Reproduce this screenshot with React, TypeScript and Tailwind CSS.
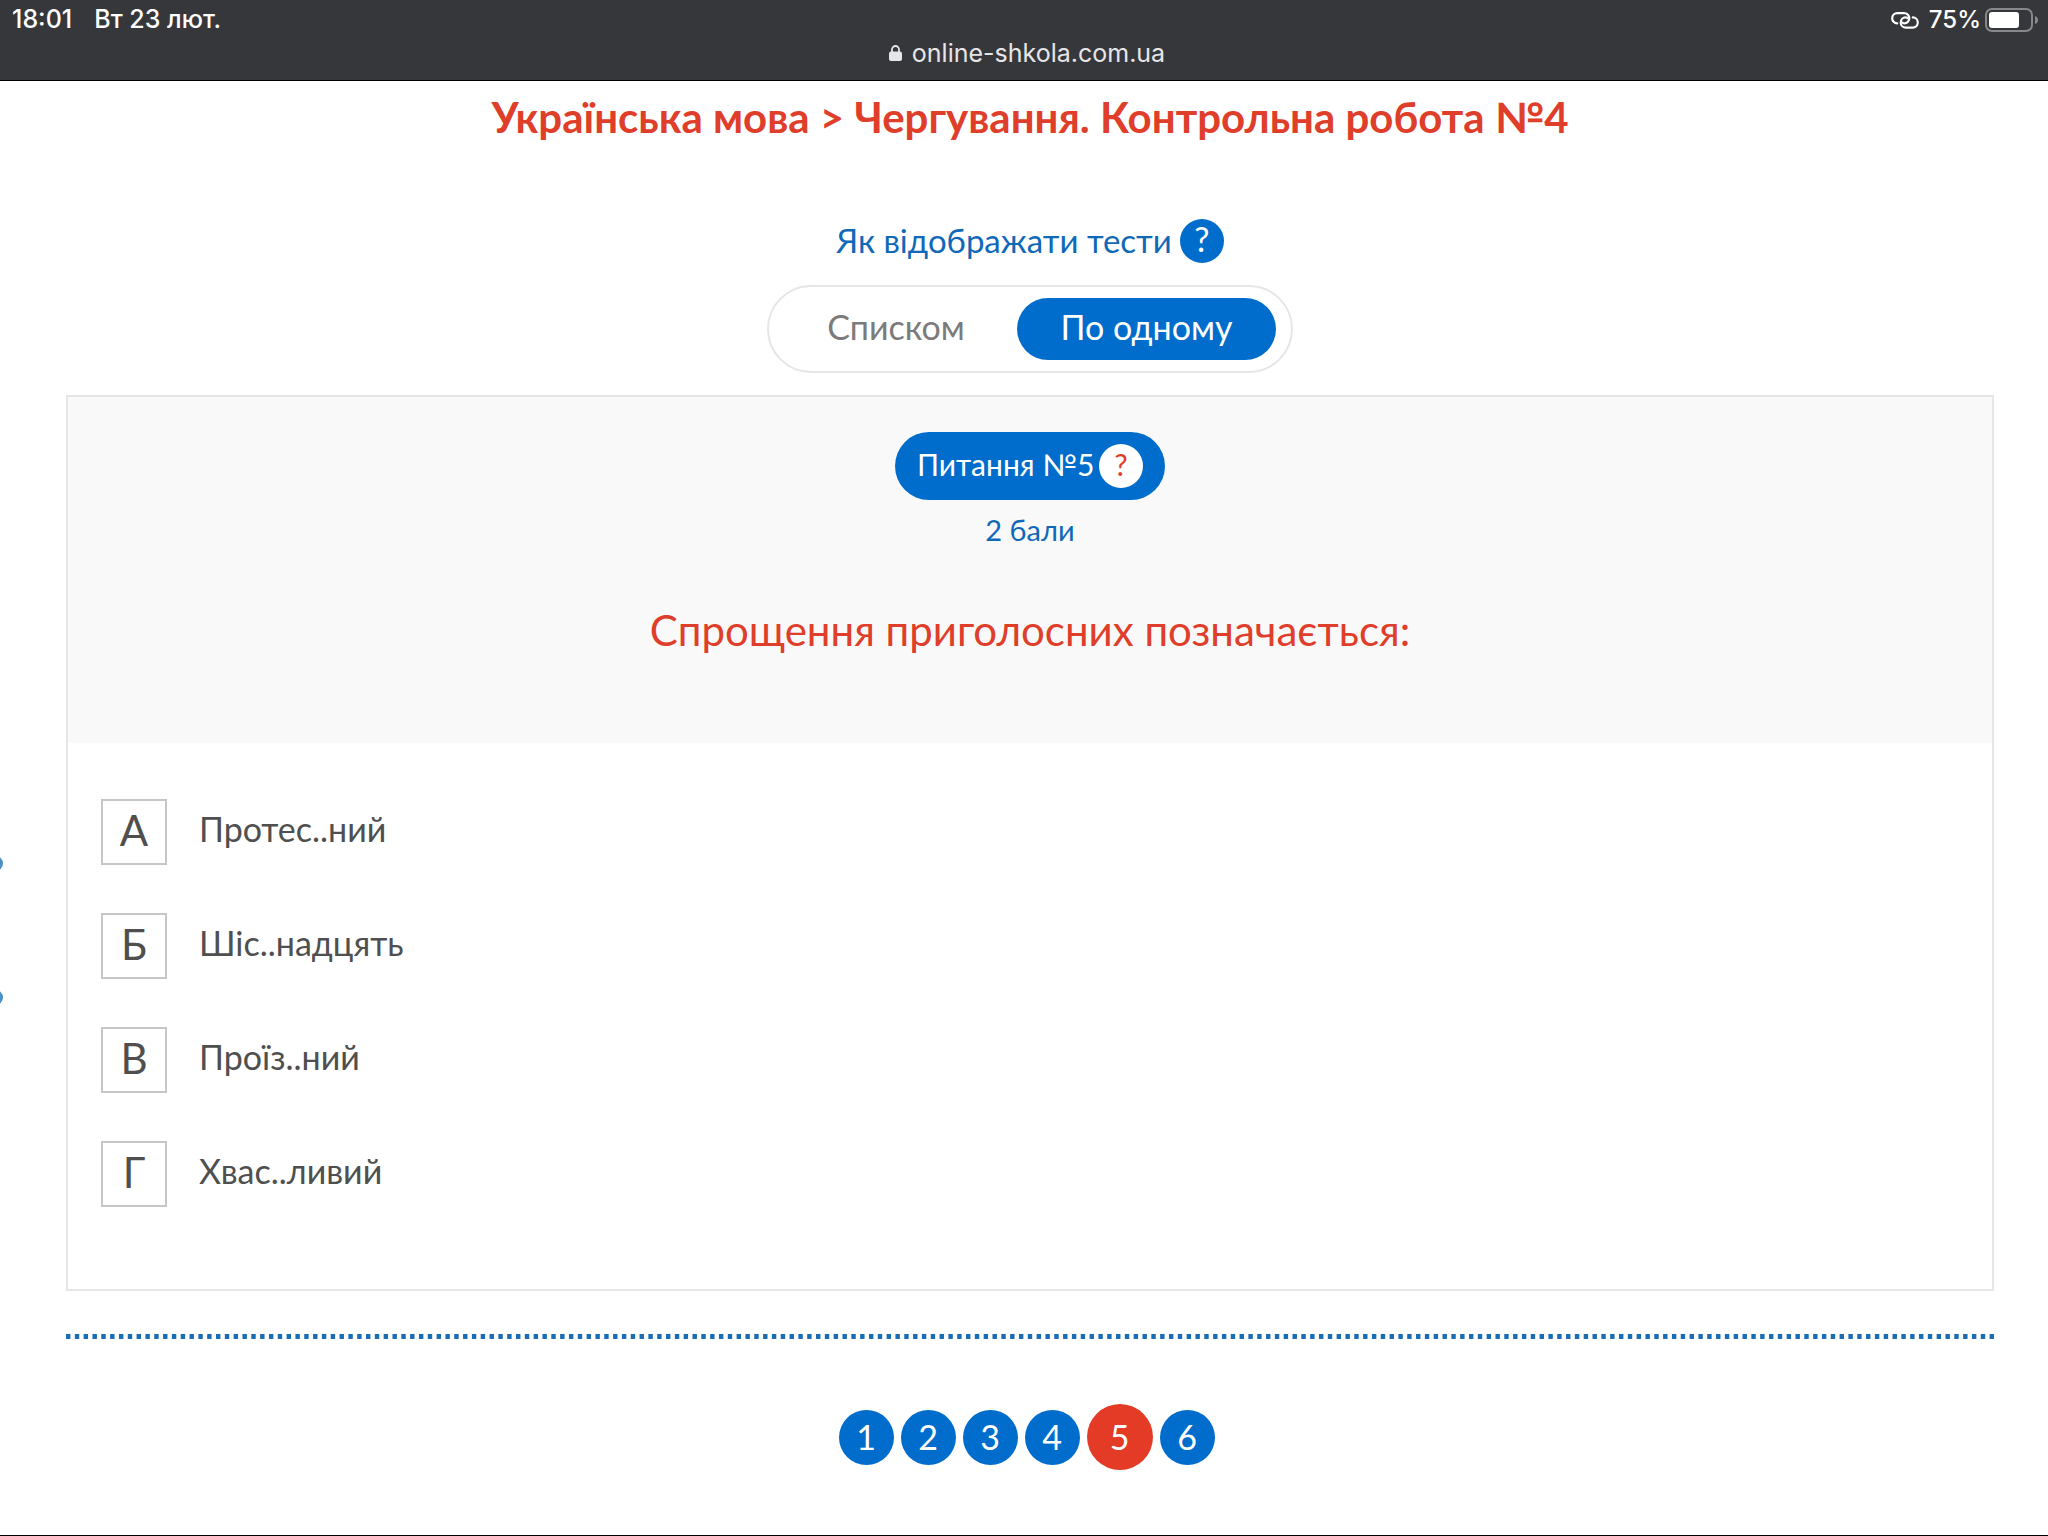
import { useState } from "react";

const answers = [
  { letter: "А", text: "Протес..ний" },
  { letter: "Б", text: "Шіс..надцять" },
  { letter: "В", text: "Проїз..ний" },
  { letter: "Г", text: "Хвас..ливий" },
];

const pages = [1, 2, 3, 4, 5, 6];

const LinkIcon = () => (
  <svg className="w-7 h-[17px]" viewBox="0 0 28 17" fill="none" stroke="white" strokeWidth="2.2" strokeLinecap="round">
    <path d="M6.2 11.4 A5.1 5.1 0 0 1 6.4 1.2 H13 A5.1 5.1 0 0 1 13.4 11.4 Q11.8 11.4 11.6 10.6" />
    <path d="M21.8 5.4 A5.1 5.1 0 0 1 21.6 15.6 H15 A5.1 5.1 0 0 1 14.6 5.4 Q16.2 5.4 16.4 6.2" />
  </svg>
);

const LockIcon = () => (
  <svg className="w-[13px] h-4" viewBox="0 0 13 16" fill="none">
    <rect x="0" y="6.5" width="13" height="9.5" rx="2" fill="#e6e6e8" />
    <path d="M3 8 V4.5 A3.5 3.5 0 0 1 10 4.5 V8" stroke="#e6e6e8" strokeWidth="1.8" />
  </svg>
);

const BatteryIcon = () => (
  <svg className="w-[54px] h-6" viewBox="0 0 54 24" fill="none">
    <rect x="1" y="1" width="46" height="22" rx="6" stroke="#87888b" strokeWidth="2" />
    <rect x="4" y="4" width="30" height="16" rx="3" fill="white" />
    <path d="M50 8 Q53 9 53 12 Q53 15 50 16 Z" fill="#87888b" />
  </svg>
);

const BrowserBar = () => (
  <header className="bg-[#36373b] border-b border-black text-white font-['Inter',sans-serif]">
    <div className="flex justify-between items-center h-10 pl-3 pr-[9px] text-2xl font-medium">
      <div className="flex gap-[22px] text-[25px]">
        <span>18:01</span>
        <span>Вт 23 лют.</span>
      </div>
      <div className="flex items-center">
        <LinkIcon />
        <span className="ml-2.5 mr-1">75%</span>
        <BatteryIcon />
      </div>
    </div>
    <div className="flex justify-center items-center gap-2.5 h-10 pb-3.5 pl-1.5 text-[25px] leading-6 text-[#e6e6e8]">
      <LockIcon />
      <span>online-shkola.com.ua</span>
    </div>
  </header>
);

const App = () => {
  const [single, setSingle] = useState(true);
  const [page, setPage] = useState(5);
  const [answer, setAnswer] = useState("");

  return (
    <div className="relative min-h-screen bg-white border-b border-black overflow-x-hidden font-['Lato','Open_Sans',sans-serif] text-[#4f4f4f]">
      <BrowserBar />

      {/* edge of the side menu dots */}
      <span className="absolute -left-3 top-[856px] size-[15px] rounded-full bg-[#4a90c8]" />
      <span className="absolute -left-3 top-[990px] size-[15px] rounded-full bg-[#4a90c8]" />

      <main className="flex flex-col items-center pl-[66px] pr-[54px]">
        <h1 className="mt-2.5 text-[42px] leading-[52px] font-bold text-[#df3e2a]">
          Українська мова &gt; Чергування. Контрольна робота №4
        </h1>

        <div className="flex items-center gap-2 mt-[76px] h-11 text-[33px] text-[#0f69b8]">
          <span>Як відображати тести</span>
          <button className="size-11 pb-1 rounded-full bg-[#006dcc] text-white text-[34px] leading-none">?</button>
        </div>

        <div className="flex items-center justify-between mt-[22px] w-[526px] h-[88px] pr-[15px] rounded-full border-2 border-[#e6e6e6] text-[34px]">
          <button onClick={() => setSingle(false)} className="flex-1 h-[62px] pl-1.5 pb-1.5 text-[#7b7b7b]">
            Списком
          </button>
          <button
            onClick={() => setSingle(true)}
            aria-pressed={single}
            className="w-[259px] h-[62px] pb-1.5 rounded-full bg-[#006dcc] text-white"
          >
            По одному
          </button>
        </div>

        <section className="w-full mt-[22px] border-2 border-[#e6e6e6]">
          <div className="flex flex-col items-center pt-[35px] h-[346px] bg-[#f9f9f9]">
            <div className="flex items-center justify-between w-[270px] h-[68px] px-[22px] rounded-full bg-[#006dcc] text-white text-[30px]">
              <span className="pb-1">Питання №5</span>
              <button className="size-11 pb-1 rounded-full bg-white text-[#df3e2a] text-[30px] leading-none">?</button>
            </div>
            <p className="mt-2.5 text-[29px] leading-10 text-[#0f69b8]">2 бали</p>
            <h2 className="mt-[52px] text-[42px] leading-[56px] text-[#df3e2a]">Спрощення приголосних позначається:</h2>
          </div>

          <div className="flex flex-col gap-12 pl-[33px] pt-[56px] pb-[82px]">
            {answers.map((item) => (
              <label key={item.letter} className="relative flex items-center gap-8 w-fit">
                <input
                  type="radio"
                  name="answer"
                  className="sr-only"
                  checked={answer === item.letter}
                  onChange={() => setAnswer(item.letter)}
                />
                <span className="flex items-center justify-center size-[66px] pb-1 border-2 border-[#c6c6c6] text-[42px]">
                  {item.letter}
                </span>
                <span className="pb-2 text-[34px]">{item.text}</span>
              </label>
            ))}
          </div>
        </section>

        <svg className="w-full h-[5px] mt-[43px]">
          <line x1="0" y1="50%" x2="100%" y2="50%" stroke="#1a6cb5" strokeWidth="5" pathLength="437" strokeDasharray="1 1" />
        </svg>

        <nav className="flex items-center mt-[65px] text-[34px] text-white">
          {pages.map((n) => (
            <button
              key={n}
              onClick={() => setPage(n)}
              className={
                n === page
                  ? "size-[66px] mr-[7px] pb-0.5 rounded-full bg-[#e43b27]"
                  : "size-[55px] mr-[7px] pb-0.5 rounded-full bg-[#006dcc]"
              }
            >
              {n}
            </button>
          ))}
        </nav>
      </main>
    </div>
  );
};

export default App;
